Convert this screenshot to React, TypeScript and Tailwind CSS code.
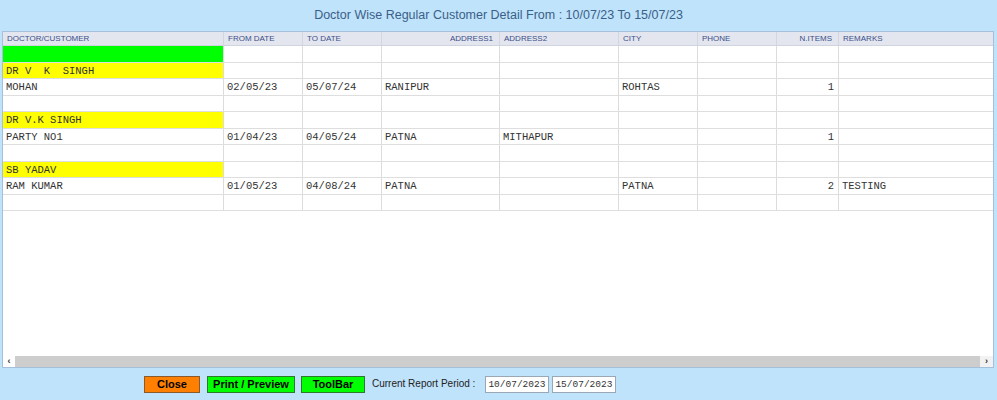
import React from "react";

type Row = { kind: "green" | "yellow" | "data" | "empty"; cells?: string[]; name?: string };

const rows: Row[] = [
  { kind: "green" },
  { kind: "yellow", name: "DR V  K  SINGH" },
  { kind: "data", cells: ["MOHAN", "02/05/23", "05/07/24", "RANIPUR", "", "ROHTAS", "", "1", ""] },
  { kind: "empty" },
  { kind: "yellow", name: "DR V.K SINGH" },
  { kind: "data", cells: ["PARTY NO1", "01/04/23", "04/05/24", "PATNA", "MITHAPUR", "", "", "1", ""] },
  { kind: "empty" },
  { kind: "yellow", name: "SB YADAV" },
  { kind: "data", cells: ["RAM KUMAR", "01/05/23", "04/08/24", "PATNA", "", "PATNA", "", "2", "TESTING"] },
  { kind: "empty" },
];

const headers = ["DOCTOR/CUSTOMER", "FROM DATE", "TO DATE", "ADDRESS1", "ADDRESS2", "CITY", "PHONE", "N.ITEMS", "REMARKS"];
const rightAligned = [false, false, false, true, false, false, false, true, false];
const gridCols = "grid grid-cols-[220px_79px_79px_118px_119px_79px_79px_62px_1fr]";
const mono = { fontFamily: "'Liberation Mono', 'Courier New', monospace" };

export default function App() {
  return (
    <div className="w-[997px] h-[400px] bg-[#bfe3fb] flex flex-col overflow-hidden" style={{ fontFamily: "'Liberation Sans', Arial, sans-serif" }}>
      <div className="h-[31px] flex items-center justify-center text-[12.5px] text-[#3b6088]">
        Doctor Wise Regular Customer Detail From : 10/07/23 To 15/07/23
      </div>
      <div className="ml-[2px] w-[992px] h-[337px] border border-[#a7bfd8] bg-white flex flex-col">
        <div className={`${gridCols} h-[14px] bg-[#e4e6ef] border-b border-[#d0d4de]`}>
          {headers.map((h, i) => (
            <div
              key={h}
              className={`text-[8px] leading-[13px] text-[#3a4f8a] ${i > 0 ? "border-l border-[#d3d6df]" : ""} ${rightAligned[i] ? "text-right pr-[6px]" : "pl-[4px]"}`}
            >
              {h}
            </div>
          ))}
        </div>
        {rows.map((r, ri) => {
          const cells: string[] =
            r.kind === "data" ? r.cells! : r.kind === "yellow" ? [r.name!, "", "", "", "", "", "", "", ""] : ["", "", "", "", "", "", "", "", ""];
          return (
            <div key={ri} className={`${gridCols} h-[16.5px] border-b border-[#dedede]`}>
              {cells.map((c, i) => {
                let bg = "";
                if (i === 0 && r.kind === "green") bg = "bg-[#00ff00]";
                if (i === 0 && r.kind === "yellow") bg = "bg-[#ffff00]";
                const right = i === 7;
                return (
                  <div
                    key={i}
                    className={`whitespace-pre text-[10.5px] leading-[16px] text-[#333333] overflow-hidden ${bg} ${i > 0 ? "border-l border-[#dcdcdc]" : ""} ${right ? "text-right pr-[4px]" : "pl-[3px]"}`}
                    style={mono}
                  >
                    {c}
                  </div>
                );
              })}
            </div>
          );
        })}
        <div className="flex-1" />
        <div className="h-[11px] bg-[#cdcdcd] flex items-center justify-between">
          <div className="w-[12px] h-[11px] bg-white flex items-center justify-center text-[9px] font-bold text-[#333]">‹</div>
          <div className="w-[13px] h-[11px] bg-[#f2f2f2] flex items-center justify-center text-[9px] font-bold text-[#333]">›</div>
        </div>
      </div>
      <div className="flex items-center h-[32px] pl-[144px]">
        <button className="w-[56px] h-[17px] bg-[#ff8000] border border-[#8a5a2a] text-[11px] font-bold text-black leading-none">Close</button>
        <button className="ml-[7px] w-[88px] h-[17px] bg-[#00ff00] border border-[#2d7a2d] text-[11px] font-bold text-black leading-none">Print / Preview</button>
        <button className="ml-[6px] w-[64px] h-[17px] bg-[#00ff00] border border-[#2d7a2d] text-[11px] font-bold text-black leading-none">ToolBar</button>
        <span className="ml-[7px] text-[10px] text-[#222] mt-[-2px]">Current Report Period :</span>
        <div className="ml-[10px] w-[64px] h-[17px] bg-white border border-[#9aa7b5] text-[9.5px] leading-[15px] pl-[2px] text-[#333]" style={mono}>10/07/2023</div>
        <div className="ml-[3px] w-[64px] h-[17px] bg-white border border-[#9aa7b5] text-[9.5px] leading-[15px] pl-[2px] text-[#333]" style={mono}>15/07/2023</div>
      </div>
    </div>
  );
}
